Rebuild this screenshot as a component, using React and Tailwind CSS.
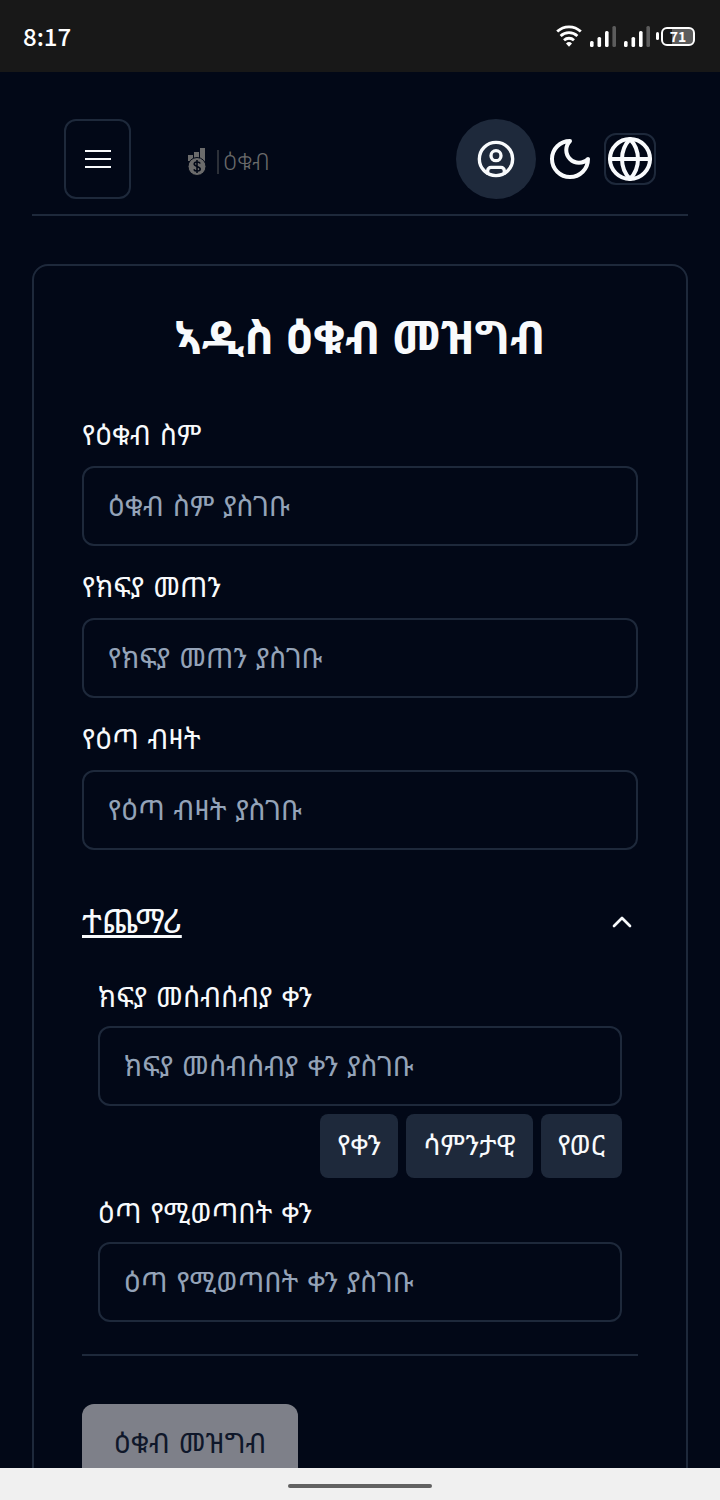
import React, { useState } from 'react';
import { ChevronUp, CircleUser, Globe, Moon } from 'lucide-react';

function WifiIcon() {
  return (
    <svg className="h-6 w-[26px]" viewBox="0 0 26 24" fill="none" stroke="#fff" strokeWidth="2.8" aria-hidden="true">
      <path d="M1.2 7.600a17 17 0 0 1 23.600 0" />
      <path d="M4.600 12a12.200 12.200 0 0 1 16.800 0" />
      <path d="M8 16.200a7.400 7.400 0 0 1 10 0" />
      <path d="M10 19.400a4.600 4.600 0 0 1 6 0L13 22.800z" fill="#fff" stroke="none" />
    </svg>
  );
}

function SignalIcon() {
  return (
    <svg className="h-6 w-[26px]" viewBox="0 0 26 24" aria-hidden="true">
      <rect x="0" y="17" width="3.600" height="6" rx="1.500" fill="#fff" />
      <rect x="7.500" y="13" width="3.600" height="10" rx="1.500" fill="#fff" />
      <rect x="15" y="7" width="3.600" height="16" rx="1.500" fill="#fff" />
      <rect x="22.400" y="2" width="3.600" height="21" rx="1.500" fill="#5c5c5c" />
    </svg>
  );
}

function StatusBar() {
  return (
    <div className="flex h-[72px] shrink-0 items-center justify-between bg-[#181818] pr-[25px] pl-[23px] font-['Noto_Sans_CJK_SC',sans-serif] text-white">
      <span className="text-2xl leading-8 font-medium">8:17</span>
      <div className="flex items-center gap-1.5">
        <div className="flex items-center gap-2">
          <WifiIcon />
          <SignalIcon />
          <SignalIcon />
        </div>
        <div className="flex items-center gap-0.5">
          <span className="h-2 w-[3px] rounded-full bg-white" />
          <span className="flex h-[19px] w-[34px] items-center justify-center rounded-md border-2 border-white bg-linear-to-r from-[#181818] from-30% to-[#5c5c5c] to-30% text-sm leading-4 font-bold">71</span>
        </div>
      </div>
    </div>
  );
}

function Logo() {
  return (
    <a href="#home" className="flex items-center pt-1.5 text-[#6b6b6b]">
      <svg className="h-7 w-5" viewBox="0 0 20 28" aria-hidden="true">
        <path fill="currentColor" d="M1 7h5v6H1zM7 4h5v6H7zM13 0h5v14h-5z" />
        <circle cx="10" cy="18.500" r="9" fill="currentColor" stroke="#020817" />
        <path d="M13.200 15.500c-1-2.200-6-2-6 .5 0 2.800 6 2 6 5 0 2.600-5.200 2.800-6.400.3M10 12v13" fill="none" stroke="#020817" strokeWidth="1.600" />
      </svg>
      <span className="mr-1 ml-2.5 h-6 w-0.5 bg-[#2c3038]" />
      <span className="text-2xl font-light">ዕቁብ</span>
    </a>
  );
}

function Header() {
  return (
    <header className="mx-8 flex items-center border-b-2 border-[#1e293b] px-8 pt-[47px] pb-[15px]">
      <button type="button" aria-label="Menu" className="flex h-20 w-[67px] items-center justify-center rounded-xl border-2 border-[#1e293b]">
        <svg className="h-[18px] w-[27px]" viewBox="0 0 27 18" fill="none" stroke="currentColor" strokeWidth="2" aria-hidden="true">
          <path d="M1 1h26M1 9h26M1 17h26" />
        </svg>
      </button>
      <div className="ml-14"><Logo /></div>
      <div className="ml-auto flex items-center gap-2.5">
        <button type="button" aria-label="Account" className="flex size-20 items-center justify-center rounded-full bg-[#1e293b]">
          <CircleUser size={40} />
        </button>
        <button type="button" aria-label="Theme">
          <svg className="size-12" viewBox="0 0 24 24" fill="none" stroke="currentColor" strokeWidth="2" strokeLinejoin="round" aria-hidden="true">
            <path d="M12 3a6 6 0 0 0 9 9 9 9 0 1 1-9-9Z" />
          </svg>
        </button>
        <button type="button" aria-label="Language" className="rounded-xl border-2 border-[#1e293b]">
          <Globe size={48} />
        </button>
      </div>
    </header>
  );
}

function Field({ id, label, placeholder, compact = false }) {
  return (
    <div className={compact ? 'flex flex-col gap-3.5' : 'flex flex-col gap-4'}>
      <label htmlFor={id} className="text-[28px] leading-7">{label}</label>
      <input id={id} placeholder={placeholder} className="h-20 w-full rounded-xl border-2 border-[#1e293b] bg-transparent px-6 text-[28px] placeholder:text-[#94a3b8]" />
    </div>
  );
}

const periods = ['የቀን', 'ሳምንታዊ', 'የወር'];

export default function App() {
  const [open, setOpen] = useState(true);
  return (
    <div className="flex h-screen flex-col bg-[#020817] font-['DejaVu_Sans','Noto_Sans_Ethiopic','Noto_Sans',sans-serif] text-[#f8fafc]">
      <StatusBar />
      <div className="min-h-0 flex-1 overflow-hidden">
        <Header />
        <main className="mx-8 mt-12 rounded-2xl border-2 border-[#1e293b] px-12 pt-[46px] pb-12">
          <h1 className="text-center font-['Noto_Sans_Ethiopic','Noto_Sans',sans-serif] text-[46px] leading-[48px] font-bold">ኣዲስ ዕቁብ መዝግብ</h1>
          <form className="mt-[62px]" onSubmit={(event) => event.preventDefault()}>
            <div className="flex flex-col gap-7">
              <Field id="name" label="የዕቁብ ስም" placeholder="ዕቁብ ስም ያስገቡ" />
              <Field id="amount" label="የክፍያ መጠን" placeholder="የክፍያ መጠን ያስገቡ" />
              <Field id="shares" label="የዕጣ ብዛት" placeholder="የዕጣ ብዛት ያስገቡ" />
            </div>
            <section className="mt-4 border-b-2 border-[#1e293b] pb-8">
              <button type="button" aria-expanded={open} onClick={() => setOpen(!open)} className="flex w-full items-center justify-between py-8 text-[33px] leading-[48px]">
                <span className="underline decoration-3 underline-offset-2">ተጨማሪ</span>
                <ChevronUp size={32} />
              </button>
              {open && (
                <div className="px-4 pt-1.5">
                  <Field compact id="collect" label="ክፍያ መሰብሰብያ ቀን" placeholder="ክፍያ መሰብሰብያ ቀን ያስገቡ" />
                  <div className="mt-2 mb-[22px] flex justify-end gap-2">
                    {periods.map((period) => (
                      <button key={period} type="button" className="h-16 rounded-lg bg-[#1e293b] px-[17px] text-[28px] leading-8">{period}</button>
                    ))}
                  </div>
                  <Field compact id="draw" label="ዕጣ የሚወጣበት ቀን" placeholder="ዕጣ የሚወጣበት ቀን ያስገቡ" />
                </div>
              )}
            </section>
            <button type="submit" className="mt-12 h-20 rounded-xl bg-[#7e8089] px-8 text-[28px] text-[#0f172a]">ዕቁብ መዝግብ</button>
          </form>
        </main>
      </div>
      <div className="flex h-8 shrink-0 items-center justify-center bg-[#f0f0f0] pt-1">
        <span className="h-1 w-36 rounded-full bg-[#616161]" />
      </div>
    </div>
  );
}
